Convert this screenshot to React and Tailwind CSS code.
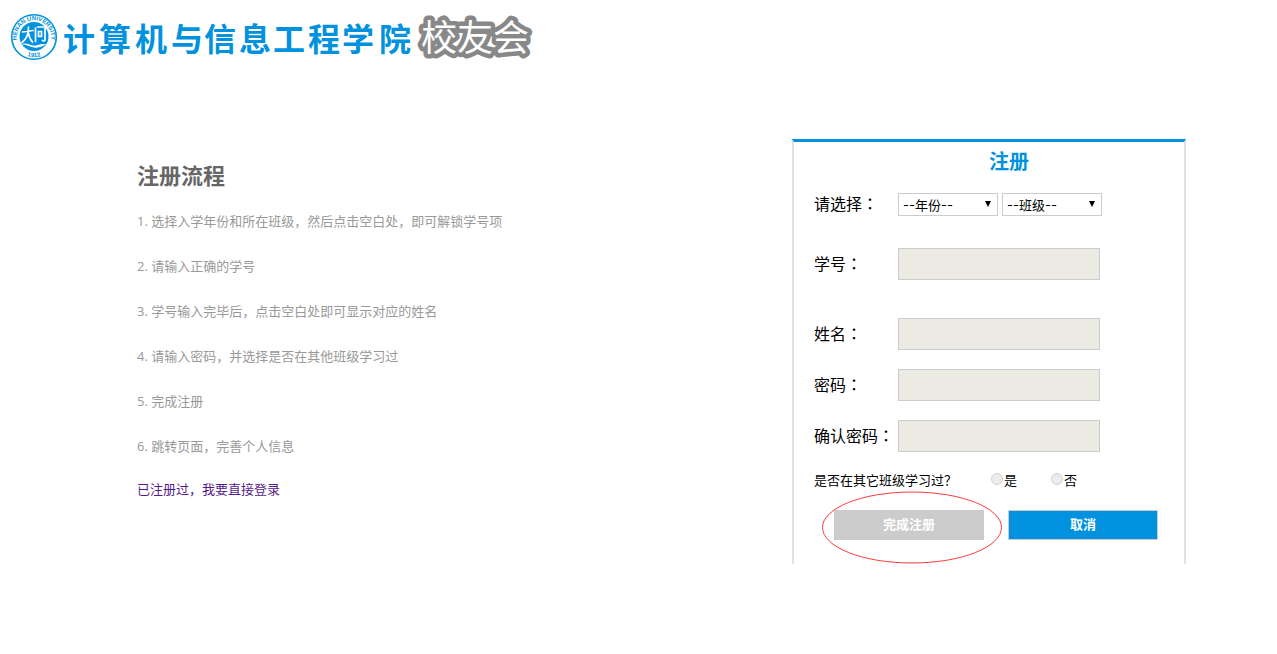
import React, { useState } from "react";

const steps = [
  "选择入学年份和所在班级，然后点击空白处，即可解锁学号项",
  "请输入正确的学号",
  "学号输入完毕后，点击空白处即可显示对应的姓名",
  "请输入密码，并选择是否在其他班级学习过",
  "完成注册",
  "跳转页面，完善个人信息",
];

// School seal, college name and the outlined "alumni" mark
const Logo = () => (
  <svg width="540" height="74" viewBox="0 0 540 74" role="img">
    <defs>
      <path id="ringTop" d="M18.8 45.5 A17.2 17.2 0 1 1 49.2 45.5" />
      <path id="ringBottom" d="M20 51.5 A20.2 20.2 0 0 0 48 51.5" />
    </defs>
    <circle cx="34" cy="37" r="22.3" fill="#fff" stroke="#0092de" strokeWidth="1.6" />
    <circle cx="34" cy="36.5" r="14.5" fill="#0092de" />
    <text className="font-['Liberation_Sans'] text-[6px] font-bold" fill="#0092de" textAnchor="middle">
      <textPath href="#ringTop" startOffset="50%">HENAN UNIVERSITY</textPath>
    </text>
    <text className="font-['Liberation_Sans'] text-[6px] font-bold" fill="#0092de" textAnchor="middle">
      <textPath href="#ringBottom" startOffset="50%">1912</textPath>
    </text>
    <g fill="none" stroke="#fff" strokeWidth="1.7" strokeLinecap="round">
      <path d="M22.5 32 L33 30.5 M28.5 27 C28.5 34 27 39 22 42.5 M28.5 33 C29 37 30.5 40 32.5 42" />
      <path d="M35.5 28 V41.5 M37.5 27 H45 V39.5 C45 41.2 43.5 41 42.5 40.5 M38.5 31.5 H41.5 V36.5 H38.5 Z" />
    </g>
    <path d="M21 44.5 C27 41.5 31 47 36 45.5 C40 44 43 43.5 47 44.5 C43 45.5 39 48.5 34 47.5 C29 46.5 26 44 21 44.5 Z" fill="#fff" />
    <text
      className="font-['Noto_Sans_CJK_SC',sans-serif] text-[32px] font-bold"
      fill="#0092de"
      x="63 99 135 171 204 239 273 308 342 379"
      y="51"
    >
      计算机与信息工程学院
    </text>
    <text
      className="font-['Noto_Sans_CJK_SC',sans-serif] text-[36px] font-normal"
      fill="#fff"
      stroke="#888"
      strokeWidth="9"
      strokeLinejoin="round"
      paintOrder="stroke"
      x="421"
      y="51"
    >
      校友会
    </text>
  </svg>
);

const fieldLabel = "w-[84px] shrink-0 pb-0.5 text-base leading-6";

const Field = ({ id, label, type = "text", className }) => (
  <div className={`flex h-8 items-center ${className}`}>
    <label htmlFor={id} className={fieldLabel}>
      {label}
      <span className="font-['Noto_Sans_CJK_TC',sans-serif]">：</span>
    </label>
    <input
      id={id}
      type={type}
      disabled
      className="h-8 w-[202px] border border-[#ccc] bg-[#ebebe4] px-2"
    />
  </div>
);

const Select = ({ label, options, value, onChange }) => (
  <div className="relative">
    <select
      aria-label={label}
      value={value}
      onChange={(e) => onChange(e.target.value)}
      className="block h-[23px] w-[100px] appearance-none border border-[#ccc] bg-white pl-1 font-['Inter','Noto_Sans_CJK_SC',sans-serif] text-[13px] leading-5"
    >
      {options.map((option) => (
        <option key={option}>{option}</option>
      ))}
    </select>
    <svg className="pointer-events-none absolute top-2 right-1.5" width="7" height="6" viewBox="0 0 7 6">
      <path d="M0 0 H6 L3 6 Z" fill="#000" />
    </svg>
  </div>
);

const RadioOption = ({ value, label }) => (
  <label className="flex w-[60px] items-center gap-px">
    <input
      type="radio"
      name="otherClass"
      value={value}
      disabled
      className="mb-1 size-3 appearance-none rounded-full border border-[#d2d2d2] bg-[#ececec]"
    />
    {label}
  </label>
);

const Guide = () => (
  <section className="pt-5">
    <h2 className="mb-2 text-[22px] leading-8 font-bold text-[#666]">注册流程</h2>
    <ol className="text-[13px] leading-[45px] text-[#999]">
      {steps.map((step, index) => (
        <li key={step}>
          {index + 1}. {step}
        </li>
      ))}
    </ol>
    <a href="#login" className="block text-[13px] leading-10 text-[#551a8b]">
      已注册过，我要直接登录
    </a>
  </section>
);

const RegisterForm = () => {
  const [year, setYear] = useState("--年份--");
  const [group, setGroup] = useState("--班级--");

  return (
    <form
      onSubmit={(e) => e.preventDefault()}
      className="w-[394px] shrink-0 border-x-2 border-t-3 border-x-[#e1e1e1] border-t-[#0092de] px-5 pb-6 text-black"
    >
      <h2 className="pl-10 text-center text-xl leading-10 font-bold text-[#0092de]">注册</h2>

      <div className="mt-[11px] flex h-[23px] items-center">
        <span className={fieldLabel}>
          请选择<span className="font-['Noto_Sans_CJK_TC',sans-serif]">：</span>
        </span>
        <div className="flex gap-1">
          <Select label="年份" options={["--年份--"]} value={year} onChange={setYear} />
          <Select label="班级" options={["--班级--"]} value={group} onChange={setGroup} />
        </div>
      </div>

      <Field id="studentNo" label="学号" className="mt-8" />
      <Field id="fullName" label="姓名" className="mt-[38px]" />
      <Field id="password" label="密码" type="password" className="mt-[19px]" />
      <Field id="confirm" label="确认密码" type="password" className="mt-[19px]" />

      <div className="mt-[19px] flex h-5 items-center text-[13px]" role="radiogroup">
        <span className="w-[177px]">是否在其它班级学习过？</span>
        <RadioOption value="yes" label="是" />
        <RadioOption value="no" label="否" />
      </div>

      <div className="mt-[19px] flex gap-6 pl-5 text-[13px] font-bold text-white">
        <div className="relative">
          <button type="submit" disabled className="h-[30px] w-[150px] bg-[#ccc]">
            完成注册
          </button>
          <svg
            className="pointer-events-none absolute -top-5 -left-3"
            width="182"
            height="75"
            viewBox="0 0 182 75"
          >
            <ellipse cx="90" cy="37.5" rx="89.5" ry="35.5" fill="none" stroke="#ff3b3b" />
          </svg>
        </div>
        <button type="button" className="h-[30px] w-[150px] border border-[#ccc] bg-[#0092de]">
          取消
        </button>
      </div>
    </form>
  );
};

const App = () => {
  return (
    <div className="min-h-screen bg-white font-['Open_Sans','Noto_Sans_CJK_SC',sans-serif]">
      <header>
        <Logo />
      </header>
      <main className="mt-[65px] flex items-start justify-between gap-8 pr-[91px] pl-[137px]">
        <Guide />
        <RegisterForm />
      </main>
    </div>
  );
};

export default App;
